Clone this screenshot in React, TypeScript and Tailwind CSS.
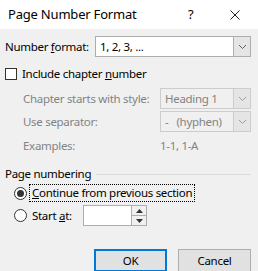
import React from 'react'

const Chevron: React.FC<{ color?: string }> = ({ color = '#606060' }) => (
    <svg width="9" height="6" viewBox="0 0 9 6">
        <path d="M1 1 L4.5 4.5 L8 1" fill="none" stroke={color} strokeWidth="1" />
    </svg>
)

const Combo: React.FC<{ value: string; width: string; disabled?: boolean }> = ({ value, width, disabled }) => (
    <div
        className={`${width} h-[21px] flex border ${disabled ? 'border-[#cccccc] bg-[#f0f0f0] text-[#838383]' : 'border-[#adadad] bg-white text-black'}`}
    >
        <div className="flex-1 flex items-center pl-[4px] whitespace-pre">{value}</div>
        <div
            className={`w-[17px] flex items-center justify-center border-l ${disabled ? 'border-[#cccccc] bg-[#e5e5e5]' : 'border-[#adadad] bg-[#e5e5e5]'}`}
        >
            <Chevron color={disabled ? '#9a9a9a' : '#606060'} />
        </div>
    </div>
)

const Radio: React.FC<{ checked?: boolean }> = ({ checked }) => (
    <div className="w-[13px] h-[13px] shrink-0 rounded-full border border-[#333333] bg-white flex items-center justify-center">
        {checked && <div className="w-[7px] h-[7px] rounded-full bg-[#333333]" />}
    </div>
)

export default function App() {
    return (
        <div
            className="w-[258px] h-[271px] overflow-hidden bg-[#f0f0f0] text-[11.5px] tracking-[-0.3px] text-black leading-none whitespace-nowrap"
            style={{ fontFamily: '"Segoe UI", "Noto Sans", sans-serif' }}
        >
            {/* title bar */}
            <div className="h-[29px] bg-white flex items-center">
                <span className="pl-[8px] text-[13px] tracking-[-0.2px] flex-1">Page Number Format</span>
                <span className="text-[13px] w-[10px] mr-[32px]">?</span>
                <svg width="10" height="10" viewBox="0 0 10 10" className="mr-[18px]">
                    <path d="M0.5 0.5 L9.5 9.5 M9.5 0.5 L0.5 9.5" stroke="#222" strokeWidth="1" />
                </svg>
            </div>

            <div className="pl-[5px] pr-[7px]">
                {/* number format */}
                <div className="mt-[7px] flex items-center h-[21px]">
                    <span className="w-[90px] shrink-0">
                        Number <u>f</u>ormat:
                    </span>
                    <Combo value="1, 2, 3, ..." width="w-[156px]" />
                </div>

                {/* include chapter number */}
                <div className="mt-[10px] flex items-center h-[13px]">
                    <div className="w-[12px] h-[12px] border border-[#333333] bg-white" />
                    <span className="ml-[5px]">
                        Include chapter <u>n</u>umber
                    </span>
                </div>

                <div className="pl-[18px] text-[#838383]">
                    <div className="mt-[8px] flex items-center h-[21px]">
                        <span className="w-[137px] shrink-0">Chapter starts with style:</span>
                        <Combo value="Heading 1" width="w-[91px]" disabled />
                    </div>
                    <div className="mt-[2px] flex items-center h-[21px]">
                        <span className="w-[137px] shrink-0">Use separator:</span>
                        <Combo value="-   (hyphen)" width="w-[91px]" disabled />
                    </div>
                    <div className="mt-[8px] flex items-center h-[12px]">
                        <span className="w-[137px] shrink-0">Examples:</span>
                        <span>1-1, 1-A</span>
                    </div>
                </div>

                {/* page numbering group */}
                <div className="mt-[15px] flex items-center h-[14px]">
                    <span>Page numbering</span>
                    <div className="flex-1 ml-[5px] h-px bg-[#dcdcdc]" />
                </div>

                <div className="pl-[9px]">
                    <div className="mt-[2px] flex items-center h-[20px]">
                        <Radio checked />
                        <span className="ml-[2px] px-[2px] py-[2px] border border-dotted border-black">
                            <u>C</u>ontinue from previous section
                        </span>
                    </div>
                    <div className="mt-[2px] flex items-center h-[21px]">
                        <Radio />
                        <span className="ml-[5px] w-[51px] shrink-0">
                            Start <u>a</u>t:
                        </span>
                        <div className="w-[64px] h-[21px] flex border border-[#adadad] bg-white">
                            <div className="flex-1" />
                            <div className="w-[15px] flex flex-col border-l border-[#adadad]">
                                <div className="flex-1 flex items-center justify-center bg-[#f0f0f0] border-b border-[#adadad]">
                                    <svg width="7" height="4" viewBox="0 0 7 4">
                                        <path d="M0 4 L3.5 0 L7 4 Z" fill="#333" />
                                    </svg>
                                </div>
                                <div className="flex-1 flex items-center justify-center bg-[#f0f0f0]">
                                    <svg width="7" height="4" viewBox="0 0 7 4">
                                        <path d="M0 0 L3.5 4 L7 0 Z" fill="#333" />
                                    </svg>
                                </div>
                            </div>
                        </div>
                    </div>
                </div>

                {/* buttons */}
                <div className="mt-[23px] flex justify-end gap-[11px]">
                    <button className="w-[73px] h-[23px] border-2 border-[#0078d7] bg-[#e1e1e1]">OK</button>
                    <button className="w-[73px] h-[23px] border border-[#adadad] bg-[#e1e1e1]">Cancel</button>
                </div>
            </div>
        </div>
    )
}
